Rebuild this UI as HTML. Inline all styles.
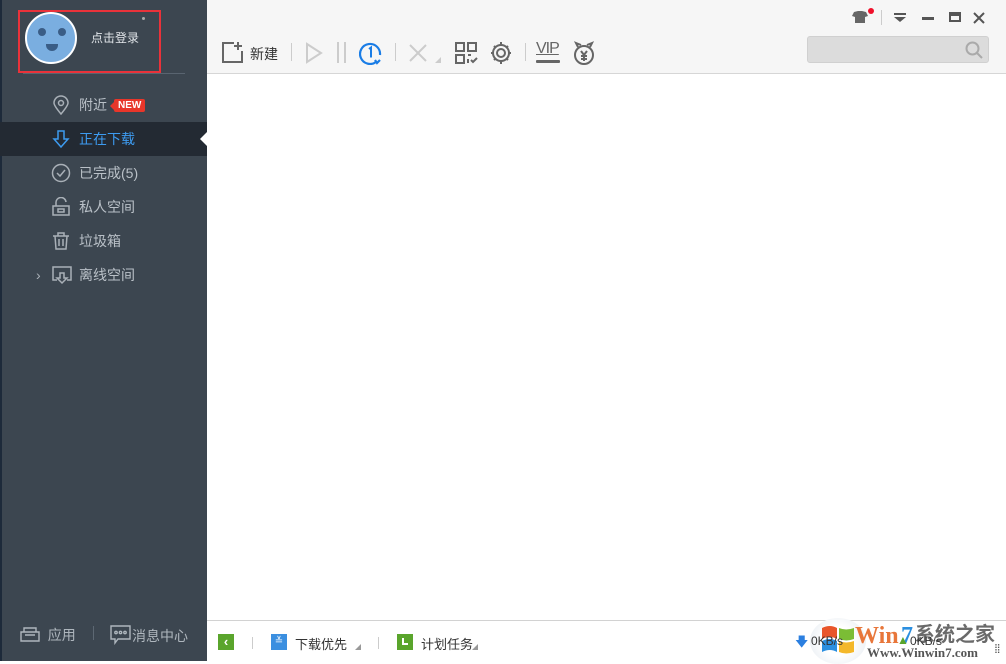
<!DOCTYPE html>
<html><head><meta charset="utf-8">
<style>
*{margin:0;padding:0;box-sizing:border-box}
body{width:1006px;height:661px;overflow:hidden;position:relative;background:#fff;font-family:"Liberation Sans","Noto Sans CJK SC",sans-serif}
#side{position:absolute;left:0;top:0;width:207px;height:661px;background:#3c4650;border-left:2px solid #1d2a3a}
.av{position:absolute;left:23px;top:12px;width:52px;height:52px;border-radius:50%;background:#7aaee0;border:2px solid #fff}
.eye{position:absolute;width:8px;height:8px;border-radius:50%;background:#3a5d86;top:14px}
.mouth{position:absolute;left:19px;top:30px;width:12px;height:7px;border-radius:0 0 7px 7px;background:#3a5d86}
.redbox{position:absolute;left:16px;top:10px;width:143px;height:63px;border:2px solid #e9323a}
.login{position:absolute;left:89px;top:29px;color:#e2e6ea;font-size:12px}
.hr{position:absolute;left:21px;top:73px;width:162px;height:1px;background:#596470}
.item{position:absolute;left:-2px;width:207px;height:34px;color:#b9c0c7;font-size:14px;line-height:34px;padding-left:79px}
.item svg{position:absolute;left:51px;top:7px}
.act{background:#232a33;color:#3d9bf0}
.new{display:inline-block;background:#e8362a;color:#fff;font-size:10px;font-weight:bold;line-height:13px;padding:0 4px;border-radius:2px;margin-left:7px;vertical-align:2px;position:relative}
.new:before{content:"";position:absolute;left:-4px;top:3px;border:4px solid transparent;border-left:0;border-right-color:#e8362a}
.arrowL{position:absolute;left:198px;top:132px;border:7px solid transparent;border-right:7px solid #fff;border-left:0}
.bot{position:absolute;top:625px;color:#aeb6bd;font-size:14px;white-space:nowrap}
#top{position:absolute;left:207px;top:0;width:799px;height:74px;background:#f6f6f6;border-bottom:1px solid #d6d6d6}
#status{position:absolute;left:207px;top:620px;width:799px;height:41px;background:#fff;border-top:1px solid #d2d2d2;font-size:13px;color:#333;white-space:nowrap}
.search{position:absolute;left:600px;top:36px;width:182px;height:27px;background:#dcdcdc;border:1px solid #d0d0d0;border-radius:3px}
</style></head><body>
<div id="side">
 <div class="av"><div class="eye" style="left:11px"></div><div class="eye" style="left:31px"></div><div class="mouth"></div></div>
 <div class="redbox"></div>
 <div style="position:absolute;left:140px;top:17px;width:3px;height:3px;background:#aaa;border-radius:50%"></div>
 <div class="login">点击登录</div>
 <div class="hr"></div>
 <div class="item" style="top:88px"><svg width="20" height="20" viewBox="0 0 20 20" fill="none" stroke="#a9b0b7" stroke-width="1.5"><path d="M10 19C5 13 3 10 3 8a7 7 0 0114 0c0 2-2 5-7 11z"/><circle cx="10" cy="8" r="2.5"/></svg>附近<span class="new">NEW</span></div>
 <div class="item act" style="top:122px"><svg width="20" height="20" viewBox="0 0 20 20" fill="none" stroke="#3d9bf0" stroke-width="1.5"><path d="M7 2h6v8h4l-7 8-7-8h4z"/></svg>正在下载</div>
 <div class="arrowL"></div>
 <div class="item" style="top:156px"><svg width="20" height="20" viewBox="0 0 20 20" fill="none" stroke="#a9b0b7" stroke-width="1.5"><circle cx="10" cy="10" r="8.5"/><path d="M6 10l3 3 5-6"/></svg>已完成(5)</div>
 <div class="item" style="top:190px"><svg width="20" height="20" viewBox="0 0 20 20" fill="none" stroke="#a9b0b7" stroke-width="1.5"><rect x="2" y="9" width="16" height="9"/><path d="M5 9V6a5 5 0 0110-1"/><rect x="7" y="12" width="6" height="3"/></svg>私人空间</div>
 <div class="item" style="top:224px"><svg width="20" height="20" viewBox="0 0 20 20" fill="none" stroke="#a9b0b7" stroke-width="1.5"><path d="M2 5h16M7 5V2h6v3M4 5l1 13h10l1-13M8 8v7M12 8v7"/></svg>垃圾箱</div>
 <div class="item" style="top:258px"><span style="position:absolute;left:36px;color:#a9b0b7">›</span><svg width="22" height="20" viewBox="0 0 22 20" fill="none" stroke="#a9b0b7" stroke-width="1.5"><path d="M6 15H2V2h18v13h-4M9 8h4v5h3l-5 5-5-5h3z"/></svg>离线空间</div>
 <div class="bot" style="left:18px"><svg width="20" height="16" viewBox="0 0 20 16" fill="none" stroke="#aeb6bd" stroke-width="1.4" style="vertical-align:-2px"><path d="M1 6h18v9H1zM4 6V2h12v4M5 9h10"/></svg>&nbsp; 应用</div>
 <div style="position:absolute;left:91px;top:626px;width:1px;height:14px;background:#5d6873"></div>
 <div class="bot" style="left:108px"><svg width="22" height="20" viewBox="0 0 22 20" fill="none" stroke="#aeb6bd" stroke-width="1.4" style="vertical-align:-4px"><path d="M1 1h19v13H8l-3 4v-4H1z"/><circle cx="6" cy="7.5" r="1.2"/><circle cx="10.5" cy="7.5" r="1.2"/><circle cx="15" cy="7.5" r="1.2"/></svg>消息中心</div>
</div>
<div id="top">
 <svg style="position:absolute;left:14px;top:41px" width="22" height="22" viewBox="0 0 22 22" fill="none" stroke="#666" stroke-width="2"><path d="M13 2H2v19h19V10M17 1v8M13 5h8"/></svg>
 <span style="position:absolute;left:43px;top:44px;font-size:14px;color:#333">新建</span>
 <div style="position:absolute;left:84px;top:43px;width:1px;height:18px;background:#ccc"></div>
 <svg style="position:absolute;left:97px;top:42px" width="20" height="22" viewBox="0 0 20 22" fill="none" stroke="#ccc" stroke-width="2"><path d="M3 2l14 9-14 9z"/></svg>
 <div style="position:absolute;left:130px;top:42px;width:2px;height:21px;background:#ccc"></div>
 <div style="position:absolute;left:137px;top:42px;width:2px;height:21px;background:#ccc"></div>
 <svg style="position:absolute;left:152px;top:41px" width="24" height="24" viewBox="0 0 24 24" fill="none" stroke="#1a7de6" stroke-width="2.2"><path d="M17 21A10 10 0 1 1 21 14"/><path d="M16 19l2 3 3-3"/><path d="M10 8l2-1.5v10" stroke-width="2"/></svg>
 <div style="position:absolute;left:188px;top:43px;width:1px;height:18px;background:#ccc"></div>
 <svg style="position:absolute;left:201px;top:43px" width="20" height="20" viewBox="0 0 20 20" stroke="#ccc" stroke-width="2"><path d="M2 2l16 16M18 2L2 18"/></svg>
 <div style="position:absolute;left:228px;top:57px;border:3px solid transparent;border-right-color:#ccc;border-bottom-color:#ccc"></div>
 <svg style="position:absolute;left:248px;top:42px" width="24" height="22" viewBox="0 0 24 22" fill="none" stroke="#666" stroke-width="2"><rect x="1" y="1" width="8" height="8"/><rect x="13" y="1" width="8" height="8"/><rect x="1" y="13" width="8" height="8"/><path d="M13 13h3M13 17v4M16 18l2 2 4-4"/></svg>
 <svg style="position:absolute;left:282px;top:40px" width="24" height="26" viewBox="0 0 24 26" fill="none" stroke="#666" stroke-width="2"><circle cx="12" cy="13" r="8"/><circle cx="12" cy="13" r="4"/><path d="M12 2v3M12 21v3M2 13h3M19 13h3M5 6l2 2M17 18l2 2M19 6l-2 2M5 20l2-2"/></svg>
 <div style="position:absolute;left:318px;top:43px;width:1px;height:18px;background:#ccc"></div>
 <span style="position:absolute;left:329px;top:40px;font-size:16px;color:#666;letter-spacing:-1px;text-decoration:underline">VIP</span>
 <div style="position:absolute;left:329px;top:60px;width:24px;height:3px;background:#666;border-radius:1px"></div>
 <svg style="position:absolute;left:365px;top:40px" width="24" height="26" viewBox="0 0 24 26" fill="none" stroke="#666" stroke-width="2"><circle cx="12" cy="15" r="9"/><path d="M6 7l-2-4 5 2M18 7l2-4-5 2M9 11l3 4 3-4M12 15v6M9 16h6M9 19h6"/></svg>
 <svg style="position:absolute;left:645px;top:10px" width="16" height="14" viewBox="0 0 16 14" fill="#666"><path d="M2 2l4-1h4l4 1 2 4-3 1v6H3V7L0 6z"/></svg>
 <div style="position:absolute;left:661px;top:8px;width:6px;height:6px;border-radius:50%;background:#f0102a"></div>
 <div style="position:absolute;left:674px;top:10px;width:1px;height:15px;background:#ccc"></div>
 <div style="position:absolute;left:687px;top:13px;width:12px;height:2px;background:#555"></div>
 <div style="position:absolute;left:687px;top:17px;border:6px solid transparent;border-top:5px solid #555;border-bottom:0"></div>
 <div style="position:absolute;left:715px;top:17px;width:12px;height:3px;background:#555"></div>
 <div style="position:absolute;left:742px;top:12px;width:12px;height:10px;border:2px solid #555;border-top-width:4px"></div>
 <svg style="position:absolute;left:766px;top:12px" width="12" height="12" viewBox="0 0 12 12" stroke="#555" stroke-width="2"><path d="M1 1l10 10M11 1L1 11"/></svg>
 <div class="search"><svg style="position:absolute;left:157px;top:4px" width="18" height="18" viewBox="0 0 18 18" fill="none" stroke="#aaa" stroke-width="2"><circle cx="7.5" cy="7.5" r="6"/><path d="M12 12l5 5"/></svg></div>
</div>
<div id="status">
 <div style="position:absolute;left:11px;top:13px;width:16px;height:16px;background:#5aa52c;color:#fff;font-weight:bold;font-size:13px;line-height:16px;text-align:center">‹</div>
 <div style="position:absolute;left:45px;top:16px;width:1px;height:12px;background:#ccc"></div>
 <div style="position:absolute;left:64px;top:13px;width:16px;height:16px;background:#3b8fe0;color:#fff;font-size:10px;line-height:16px;text-align:center">≚</div>
 <span style="position:absolute;left:88px;top:13px">下载优先</span>
 <div style="position:absolute;left:148px;top:23px;border:3px solid transparent;border-right-color:#999;border-bottom-color:#999"></div>
 <div style="position:absolute;left:171px;top:16px;width:1px;height:12px;background:#ccc"></div>
 <div style="position:absolute;left:190px;top:13px;width:16px;height:16px;background:#5aa52c"><div style="position:absolute;left:5px;top:4px;width:6px;height:7px;border-left:2px solid #fff;border-bottom:2px solid #fff"></div></div>
 <span style="position:absolute;left:214px;top:13px">计划任务</span>
 <div style="position:absolute;left:265px;top:23px;border:3px solid transparent;border-right-color:#999;border-bottom-color:#999"></div>
 <div style="position:absolute;left:603px;top:-3px;width:56px;height:46px;border-radius:50%;background:radial-gradient(circle,#fff 40%,#e4eaf0)"></div>
 <svg style="position:absolute;left:613px;top:3px" width="36" height="32" viewBox="0 0 36 32"><path d="M2 4q8-4 15 0v11q-7-4-15 0z" fill="#e8552a"/><path d="M19 4q7 3 15 0v11q-8 3-15 0z" fill="#7bbd35"/><path d="M2 17q8-4 15 0v11q-7-4-15 0z" fill="#2b8fe0"/><path d="M19 17q7 3 15 0v11q-8 3-15 0z" fill="#f4b82a"/></svg>
 <span style="position:absolute;left:588px;top:12px;color:#2b7fe0">🡇</span>
 <span style="position:absolute;left:604px;top:13px;font-size:12px">0KB/s</span>
 <span style="position:absolute;left:648px;top:3px;font-family:'Liberation Serif',serif;font-weight:bold;font-size:24px;color:#e8763a;line-height:1">Win</span>
 <span style="position:absolute;left:694px;top:3px;font-family:'Liberation Serif',serif;font-weight:bold;font-size:24px;color:#2b8fe0;line-height:1">7</span>
 <span style="position:absolute;left:708px;top:4px;font-size:20px;color:#6a6a6a;font-weight:bold;line-height:1">系统之家</span>
 <span style="position:absolute;left:660px;top:24px;font-family:'Liberation Serif',serif;font-weight:bold;font-size:13px;color:#555">Www.Winwin7.com</span>
 <span style="position:absolute;left:690px;top:12px;color:#5aa52c;font-size:12px">▲</span>
 <span style="position:absolute;left:703px;top:13px;font-size:12px">0KB/s</span>
 <span style="position:absolute;left:787px;top:22px;font-size:9px;color:#555">⣿</span>
</div>
</body></html>
